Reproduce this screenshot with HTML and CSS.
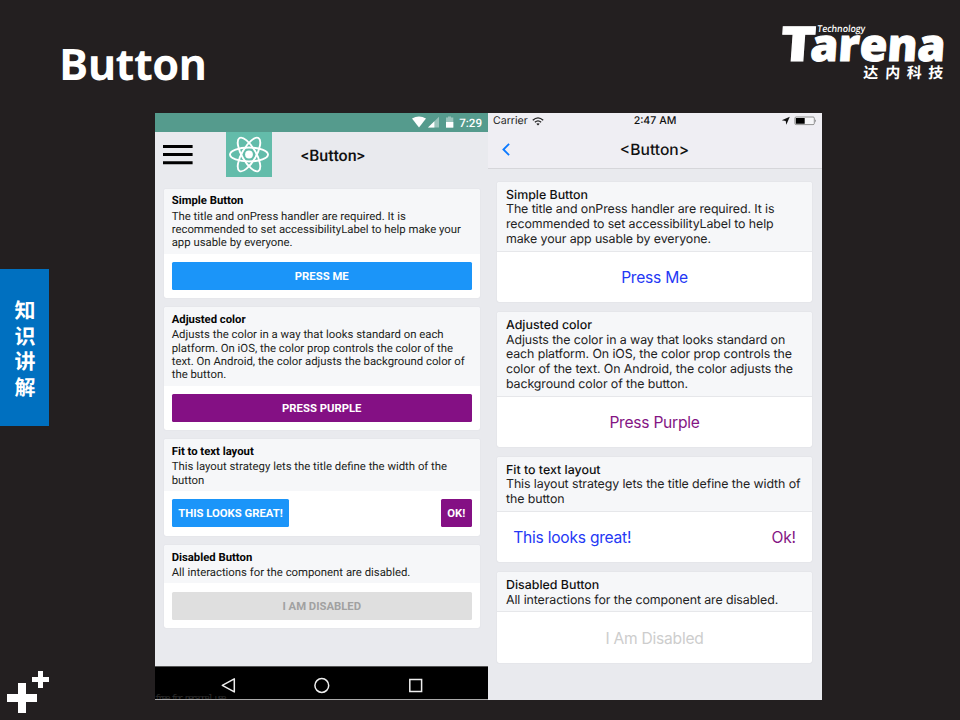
FILE: index.html
```html
<!DOCTYPE html>
<html lang="zh-CN">
<head>
<meta charset="utf-8">
<title>Button</title>
<link rel="stylesheet" href="styles.css">
</head>
<body>
<header class="slide-header">
  <h1 class="slide-title">Button</h1>
  <svg class="logo" width="170" height="60" viewBox="0 0 170 60" aria-label="Tarena">
    <g fill="#fff">
      <text class="logo-word logo-t" transform="translate(3.4 39) skewX(-4)" textLength="35" lengthAdjust="spacingAndGlyphs">T</text>
      <text class="logo-word" transform="translate(33.6 38.5) skewX(-4)" textLength="135" lengthAdjust="spacingAndGlyphs">arena</text>
      <text class="logo-tag" transform="translate(41 10.4) skewX(-6)" textLength="48" lengthAdjust="spacingAndGlyphs">Technology</text>
      <text class="logo-cn" transform="translate(87 56) skewX(-3)" x="0 22 43.5 65">达内科技</text>
    </g>
  </svg>
</header>

<main class="stage">
  <aside class="rail">
    <div class="rail-tab">知识讲解</div>
    <svg class="pluses" width="43" height="43" viewBox="0 0 43 43" fill="#fff">
      <path d="M11 12h8v11h11v8H19v11h-8V31H0v-8h11z"/>
      <path d="M31 0h5v6h6v5h-6v6h-5v-6h-6V6h6z"/>
    </svg>
  </aside>

  <section class="android">
    <div class="a-status">
      <svg width="42" height="13" viewBox="0 0 42 13">
        <path d="M0 2.6Q7 -1.6 14 2.6L7 11.6z" fill="#fff"/>
        <path d="M27 .8v10.8H16z" fill="#9ac4bc"/>
        <path d="M22.4 5.3v6.3H16z" fill="#fff"/>
        <path d="M36 .4h3v1.2h2.3v10H34v-10h2z" fill="#9ac4bc"/>
        <path d="M34 6h7.3v5.6H34z" fill="#fff"/>
      </svg>
      <span>7:29</span>
    </div>
    <div class="a-toolbar">
      <svg class="burger" width="30" height="21" viewBox="0 0 30 21"><path d="M0 2.4h29.6M0 10.5h29.6M0 18.7h29.6" stroke="#000" stroke-width="3"/></svg>
      <svg class="react" width="46" height="45" viewBox="0 0 46 45">
        <path d="M0 0h46v45H0z" fill="#63bcaa"/>
        <g fill="none" stroke="#fff" stroke-width="1.9">
          <ellipse cx="23" cy="22.5" rx="19" ry="7"/>
          <ellipse cx="23" cy="22.5" rx="19" ry="7" transform="rotate(60 23 22.5)"/>
          <ellipse cx="23" cy="22.5" rx="19" ry="7" transform="rotate(120 23 22.5)"/>
        </g>
        <circle cx="23" cy="22.5" r="3.9" fill="#fff"/>
      </svg>
      <h2>&lt;Button&gt;</h2>
    </div>
    <div class="a-list">
      <article class="a-card">
        <div class="a-head"><h3>Simple Button</h3><p>The title and onPress handler are required. It is<br>recommended to set accessibilityLabel to help make your<br>app usable by everyone.</p></div>
        <div class="a-body"><button class="a-btn blue wide">PRESS ME</button></div>
      </article>
      <article class="a-card">
        <div class="a-head"><h3>Adjusted color</h3><p>Adjusts the color in a way that looks standard on each<br>platform. On iOS, the color prop controls the color of the<br>text. On Android, the color adjusts the background color of<br>the button.</p></div>
        <div class="a-body"><button class="a-btn purple wide">PRESS PURPLE</button></div>
      </article>
      <article class="a-card">
        <div class="a-head"><h3>Fit to text layout</h3><p>This layout strategy lets the title define the width of the<br>button</p></div>
        <div class="a-body"><button class="a-btn blue">THIS LOOKS GREAT!</button><button class="a-btn purple">OK!</button></div>
      </article>
      <article class="a-card">
        <div class="a-head"><h3>Disabled Button</h3><p>All interactions for the component are disabled.</p></div>
        <div class="a-body"><button class="a-btn off wide">I AM DISABLED</button></div>
      </article>
    </div>
    <div class="a-nav">
      <svg width="333" height="34" viewBox="0 0 333 34" fill="none" stroke="#eee" stroke-width="1.5">
        <path d="M79.3 12.9v13L67.3 19.4z" stroke-linejoin="round"/>
        <circle cx="166.8" cy="19.5" r="6.9"/>
        <path d="M254.8 13.6h11.8v11.8h-11.8z"/>
      </svg>
      <span class="license">free for personal use</span>
    </div>
  </section>

  <section class="ios">
    <div class="i-top">
      <div class="i-status">
        <span class="i-carrier">Carrier
          <svg width="12" height="9" viewBox="0 0 12 9" fill="none" stroke="#222" stroke-width="1.3"><path d="M.8 3.3Q6 -1.5 11.2 3.3M2.9 5.3Q6 2.5 9.1 5.3"/><path d="M4.3 6.8Q6 5.5 7.7 6.8L6 8.6z" fill="#222" stroke="none"/></svg>
        </span>
        <span class="i-time">2:47 AM</span>
        <svg class="i-icons" width="36" height="10" viewBox="0 0 36 10">
          <path d="M8.8 .8L5.3 8.8 4.7 4.9.8 4.3z" fill="#111"/>
          <rect x="13.9" y="1" width="19.4" height="7.6" rx="1.2" fill="#f6f6f8" stroke="#777" stroke-width=".8"/>
          <path d="M14.8 1.9h8.9v5.8h-8.9z" fill="#000"/>
          <path d="M34.3 3.2q1.4 1.6 0 3.2z" fill="#555"/>
        </svg>
      </div>
      <div class="i-nav">
        <svg width="8" height="13" viewBox="0 0 8 13" fill="none" stroke="#0b79ff" stroke-width="1.8"><path d="M7.1 .8L1.4 6.5l5.7 5.7"/></svg>
        <h2>&lt;Button&gt;</h2>
      </div>
    </div>
    <div class="i-list">
      <article class="i-card">
        <div class="i-head"><h3>Simple Button</h3><p>The title and onPress handler are required. It is<br>recommended to set accessibilityLabel to help<br>make your app usable by everyone.</p></div>
        <div class="i-body"><button class="i-btn i-blue">Press Me</button></div>
      </article>
      <article class="i-card">
        <div class="i-head"><h3>Adjusted color</h3><p>Adjusts the color in a way that looks standard on<br>each platform. On iOS, the color prop controls the<br>color of the text. On Android, the color adjusts the<br>background color of the button.</p></div>
        <div class="i-body"><button class="i-btn i-purple">Press Purple</button></div>
      </article>
      <article class="i-card">
        <div class="i-head"><h3>Fit to text layout</h3><p>This layout strategy lets the title define the width of<br>the button</p></div>
        <div class="i-body split"><button class="i-btn i-blue">This looks great!</button><button class="i-btn i-purple">Ok!</button></div>
      </article>
      <article class="i-card">
        <div class="i-head"><h3>Disabled Button</h3><p>All interactions for the component are disabled.</p></div>
        <div class="i-body"><button class="i-btn i-off">I Am Disabled</button></div>
      </article>
    </div>
  </section>
</main>
</body>
</html>
```
FILE: styles.css
```css
* { box-sizing: border-box; margin: 0; padding: 0; }
body {
  width: 960px; height: 720px; overflow: hidden;
  background: #231f20;
  font-family: Roboto, "Liberation Sans", sans-serif;
  text-rendering: geometricPrecision;
}
svg { display: block; flex: none; }
h2, h3 { font-weight: 500; }
button { border: 0; background: none; font: inherit; color: inherit; white-space: nowrap; }

.slide-header { height: 113px; display: flex; justify-content: space-between; padding: 0 14px 0 59px; }
.slide-title { color: #fff; font: 700 43.5px/60px "Open Sans", "Noto Sans", sans-serif; letter-spacing: -.6px; padding-top: 34px; }
.logo { margin-top: 22px; overflow: visible; }
.logo-word { font: 800 45px "Open Sans", sans-serif; stroke: #fff; stroke-width: 1px; }
.logo-t { font-size: 48px; }
.logo-tag { font: 600 9.5px "Open Sans", sans-serif; }
.logo-cn { font: 700 15px "Noto Sans CJK SC", sans-serif; }

.stage { display: grid; grid-template-columns: 155px 333px 334px; height: 607px; }
.rail { display: flex; flex-direction: column; justify-content: space-between; padding: 156px 0 6px; }
.rail-tab {
  width: 49px; height: 157px; background: #0070c0; color: #fff;
  writing-mode: vertical-rl; padding-top: 31px; letter-spacing: 4.4px;
  font: 700 21px/49px "Noto Sans CJK SC", sans-serif;
}
.pluses { margin-left: 7px; }

.android { height: 587px; background: #e9eaee; display: flex; flex-direction: column; color: #1c1e21; }
.a-status {
  height: 19px; background: #559b8d; color: #fff; padding-right: 6px;
  display: flex; justify-content: flex-end; align-items: center; gap: 5px;
  font-size: 11.6px; font-weight: 500; line-height: 20px;
}
.a-toolbar { height: 56.5px; display: flex; align-items: flex-start; padding-left: 8px; }
.burger { margin-top: 12px; }
.react { margin-left: 33px; }
.a-toolbar h2 { margin-left: 29px; font-size: 16px; line-height: 48px; color: #111; }
.a-list { flex: 1; display: flex; flex-direction: column; gap: 9.2px; padding: 0 8px 0 8.5px; }
.a-card { background: #fff; border-radius: 2px; overflow: hidden; box-shadow: 0 0 1px #c9cbd2; }
.a-head { background: #f6f7f9; padding: 4.8px 0 4.1px 8.2px; white-space: nowrap; }
.a-head h3 { font-size: 11.3px; font-weight: 700; line-height: 15.5px; margin-bottom: .8px; color: #050505; }
.a-head p { font-size: 11.35px; line-height: 13.3px; }
.a-body { display: flex; justify-content: space-between; padding: 8.3px 8.2px 8.2px; }
.a-btn { height: 28px; border-radius: 1.5px; font-size: 11.3px; font-weight: 700; color: #fff; padding: 1px 6.5px 0; }
.wide { flex: 1; }
.blue { background: #1b95f9; }
.purple { background: #841084; }
.off { background: #dfdfdf; color: #a1a1a1; }
.a-nav { position: relative; overflow: hidden; height: 34px; background: #000; border-top: 1px solid #555; border-bottom: 1px solid #aaa; }
.a-nav svg { margin-top: -1px; }
.license { position: absolute; left: 0; top: 26px; font: 9.5px/11px "Liberation Mono", monospace; letter-spacing: -2.4px; color: #2c2c2c; white-space: nowrap; }

.ios { height: 587px; background: #e9eaee; color: #222; font-family: Inter, "Liberation Sans", sans-serif; }
.i-top { height: 55.5px; background: #efeef3; border-bottom: 1px solid #d6d6da; }
.i-status { height: 16px; display: grid; grid-template-columns: 1fr auto 1fr; align-items: center; padding: 0 5px; font-size: 10.6px; line-height: 16px; }
.i-carrier { display: flex; align-items: center; gap: 4px; }
.i-time { font-weight: 500; color: #111; }
.i-icons { justify-self: end; }
.i-nav { display: grid; grid-template-columns: 16px 1fr 16px; align-items: center; height: 40px; padding: 0 15px 0 14px; }
.i-nav h2 { font-size: 15.6px; font-weight: 500; text-align: center; color: #111; line-height: 20px; padding-top: 1px; }
.i-list { display: flex; flex-direction: column; gap: 10px; padding: 13.7px 10px 0 9px; }
.i-card { background: #fff; border-radius: 2px; box-shadow: 0 0 1px #bfc1c8; overflow: hidden; }
.i-head { background: #f6f7f9; border-bottom: 1px solid #e6e7ea; padding: 4.5px 0 3.8px 9px; white-space: nowrap; }
.i-head h3 { font-size: 12.4px; line-height: 15.3px; margin-bottom: .5px; color: #111; }
.i-head p { font-size: 12.4px; line-height: 14.8px; letter-spacing: -.1px; }
.i-body { height: 50.6px; display: flex; align-items: center; justify-content: center; padding: 1px 16.3px 0; }
.split { justify-content: space-between; }
.i-btn { font-size: 15.6px; letter-spacing: -.25px; }
.i-blue { color: #2438f5; }
.i-purple { color: #841584; }
.i-off { color: #cdcdcd; }
```
